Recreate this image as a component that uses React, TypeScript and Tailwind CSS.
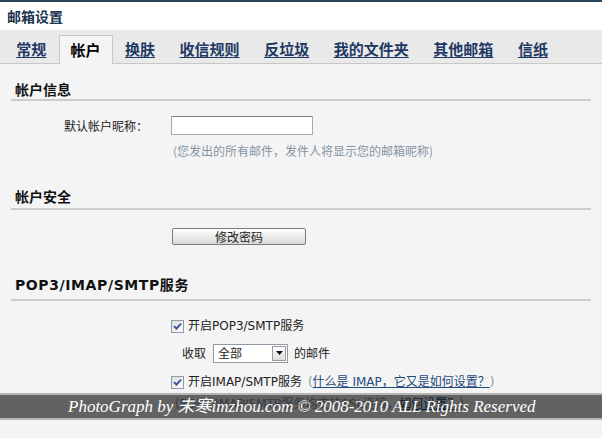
import React from 'react';

const tabs = ['常规', '帐户', '换肤', '收信规则', '反垃圾', '我的文件夹', '其他邮箱', '信纸'];

function CheckBox() {
  return (
    <span className="w-[13px] h-[13px] border border-[#8f9aa6] bg-gradient-to-br from-[#dcdcdc] to-white flex items-center justify-center shrink-0">
      <svg width="9" height="9" viewBox="0 0 9 9">
        <path d="M1 4.2 L3.4 6.6 L8 1.6" fill="none" stroke="#2a4f9c" strokeWidth="1.8" />
      </svg>
    </span>
  );
}

function SectionTitle({ children, className }: { children: React.ReactNode; className: string }) {
  return (
    <div className={`pl-[4px] leading-[20px] font-bold text-[#111] border-b-2 border-[#c9ccd1] ${className}`}>
      {children}
    </div>
  );
}

export default function App() {
  return (
    <div className="relative w-[602px] h-[438px] overflow-hidden bg-[#f4f4f4] text-[12px] text-[#222] font-['DejaVu_Sans','Noto_Sans_CJK_SC',sans-serif]">
      {/* title */}
      <div className="h-[30px] border-t-2 border-[#2d4457] bg-white flex items-center pl-[7px]">
        <span className="text-[14px] font-bold text-[#1b3550] font-['Noto_Sans_CJK_SC',sans-serif]">邮箱设置</span>
      </div>

      {/* tabs */}
      <div className="h-[34px] bg-[#e9e9e9] border-b border-[#c8c8c8] flex items-end pl-[4px] font-['Noto_Sans_CJK_SC',sans-serif]">
        {tabs.map((t) =>
          t === '帐户' ? (
            <div key={t} className="h-[29px] -mb-px px-[11px] bg-[#f4f4f4] border border-b-0 border-[#c8c8c8] flex items-center text-[15px] font-bold text-black">
              {t}
            </div>
          ) : (
            <div key={t} className="h-[28px] px-[12.3px] flex items-center text-[15px] font-bold text-[#1e3a64] underline underline-offset-2">
              {t}
            </div>
          )
        )}
      </div>

      <div className="px-[11px]">
        {/* account info */}
        <SectionTitle className="mt-[15px] text-[14px] font-['Noto_Sans_CJK_SC',sans-serif]">帐户信息</SectionTitle>
        <div className="mt-[15px] flex items-center">
          <div className="w-[137px] text-right font-['Noto_Sans_CJK_SC',sans-serif]">默认帐户昵称：</div>
          <div className="ml-[23px] w-[142px] h-[19px] bg-white border border-[#a5acb5] border-t-[#7a7f86]" />
        </div>
        <div className="mt-[8px] pl-[162px] leading-[16px] text-[#8694a4] font-['Noto_Sans_CJK_SC',sans-serif]">
          (您发出的所有邮件，发件人将显示您的邮箱昵称)
        </div>

        {/* security */}
        <SectionTitle className="mt-[27px] pb-[2px] text-[14px] font-['Noto_Sans_CJK_SC',sans-serif]">帐户安全</SectionTitle>
        <div className="mt-[18px] pl-[161px]">
          <button className="w-[134px] h-[17px] rounded-[2px] border border-[#7b7b7b] bg-gradient-to-b from-white to-[#d8d8d8] text-[12px] leading-[15px] text-[#222] font-['Noto_Sans_CJK_SC',sans-serif]">
            修改密码
          </button>
        </div>

        {/* pop3 */}
        <SectionTitle className="mt-[28px] pb-[4px] text-[14px] tracking-[0.6px]">POP3/IMAP/SMTP服务</SectionTitle>
        <div className="mt-[15px] h-[20px] pl-[160px] flex items-center gap-[4px]">
          <CheckBox />
          <span>开启POP3/SMTP服务</span>
        </div>
        <div className="mt-[7px] h-[20px] pl-[171px] flex items-center">
          <span className="font-['Noto_Sans_CJK_SC',sans-serif]">收取</span>
          <div className="ml-[7px] w-[75px] h-[19px] bg-white border border-[#8e9aa6] flex items-center justify-between pl-[4px] pr-[1px]">
            <span className="font-['Noto_Sans_CJK_SC',sans-serif]">全部</span>
            <span className="w-[14px] h-[15px] border border-[#9a9a9a] bg-gradient-to-b from-white to-[#dcdcdc] flex items-center justify-center">
              <svg width="7" height="4" viewBox="0 0 7 4">
                <path d="M0 0 H7 L3.5 4 Z" fill="#111" />
              </svg>
            </span>
          </div>
          <span className="ml-[6px] font-['Noto_Sans_CJK_SC',sans-serif]">的邮件</span>
        </div>
        <div className="mt-[9px] h-[20px] pl-[160px] flex items-center gap-[4px]">
          <CheckBox />
          <span>开启IMAP/SMTP服务</span>
          <span className="ml-[2px] text-[#8694a4]">
            (<span className="text-[#1f4a7c] underline">什么是 IMAP，它又是如何设置？</span>)
          </span>
        </div>
        <div className="mt-[2px] h-[20px] pl-[164px] flex items-center text-[#8694a4]">
          (POP3/IMAP/SMTP服务均支持SSL连接，<span className="text-[#1f4a7c] underline">如何设置？</span>)
        </div>
      </div>

      {/* watermark band */}
      <div className="absolute left-0 right-0 top-[393px] h-[27px] border-y-2 border-[#b4b4b4] bg-black/60 flex items-center pl-[68px]">
        <span className="text-white text-[17px] italic font-['Liberation_Serif','Noto_Sans_CJK_SC',serif] whitespace-nowrap">
          PhotoGraph by 未寒imzhou.com © 2008-2010 ALL Rights Reserved
        </span>
      </div>
    </div>
  );
}
